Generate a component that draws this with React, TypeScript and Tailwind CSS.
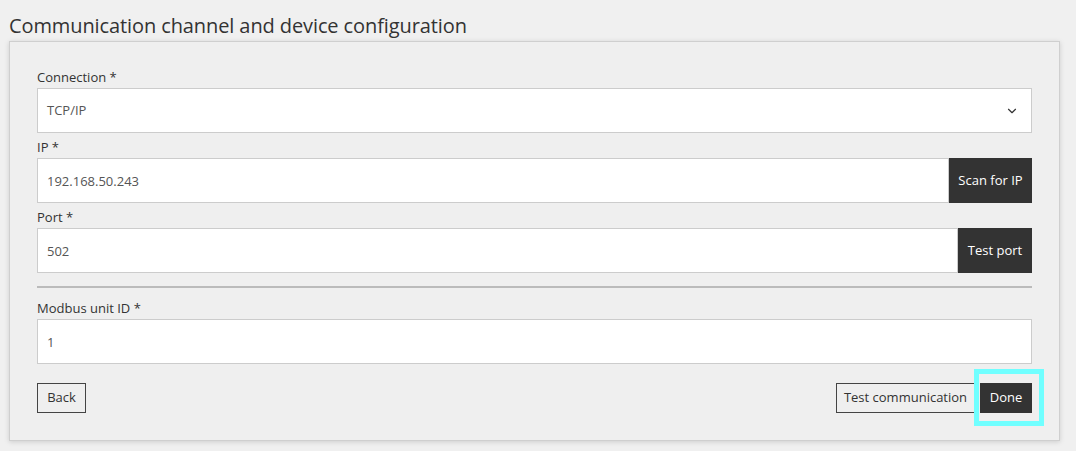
import { ChevronDown } from 'lucide-react';

const font = { fontFamily: '"Open Sans", "Liberation Sans", sans-serif' };

function Field({ label, children }: { label: string; children: React.ReactNode }) {
  return (
    <div className="flex flex-col">
      <label className="text-[13px] leading-[18px] text-[#333] mb-[2px]">{label}</label>
      {children}
    </div>
  );
}

function TextInput({ value }: { value: string }) {
  return (
    <input
      readOnly
      value={value}
      className="h-[45px] w-full min-w-0 flex-1 border border-[#cccccc] bg-white px-[9px] text-[13px] text-[#555] outline-none"
      style={font}
    />
  );
}

export default function App() {
  return (
    <div className="min-h-[451px] w-[1076px] bg-[#f0f0f0] text-[#333]" style={font}>
      <div className="pl-[9px] pr-[16px] pt-[12px]">
        <h1 className="text-[20px] leading-[28px] tracking-[-0.1px] text-[#333]">
          Communication channel and device configuration
        </h1>
        <div className="mt-[1px] border border-[#cfcfcf] bg-[#efefef] px-[27px] pt-[26px] pb-[27px] shadow-[0_1px_5px_rgba(0,0,0,0.15)]">
          <div className="flex flex-col gap-[5px]">
            <Field label="Connection *">
              <div className="flex h-[45px] items-center justify-between border border-[#cccccc] bg-white pl-[9px] pr-[12px] text-[13px] text-[#555]">
                <span>TCP/IP</span>
                <ChevronDown size={14} strokeWidth={2} className="text-[#333]" />
              </div>
            </Field>
            <Field label="IP *">
              <div className="flex">
                <TextInput value="192.168.50.243" />
                <button className="h-[45px] w-[83px] bg-[#333] text-[13px] text-white">Scan for IP</button>
              </div>
            </Field>
            <Field label="Port *">
              <div className="flex">
                <TextInput value="502" />
                <button className="h-[45px] w-[74px] bg-[#333] text-[13px] text-white">Test port</button>
              </div>
            </Field>
          </div>
          <div className="mt-[13px] mb-[11px] h-[2px] bg-[#bbbbbb]" />
          <Field label="Modbus unit ID *">
            <div className="flex">
              <TextInput value="1" />
            </div>
          </Field>
          <div className="mt-[19px] flex items-center justify-between">
            <button className="h-[30px] w-[49px] border border-[#444] text-[13px] text-[#333]">Back</button>
            <div className="flex gap-[5px]">
              <button className="h-[30px] w-[139px] border border-[#444] text-[13px] text-[#333]">Test communication</button>
              <div className="relative">
                <button className="h-[30px] w-[52px] bg-[#333] text-[13px] text-white">Done</button>
                <div className="pointer-events-none absolute -left-[6px] -top-[14px] h-[57px] w-[70px] border-[5px] border-[#70ffff]" />
              </div>
            </div>
          </div>
        </div>
      </div>
    </div>
  );
}
